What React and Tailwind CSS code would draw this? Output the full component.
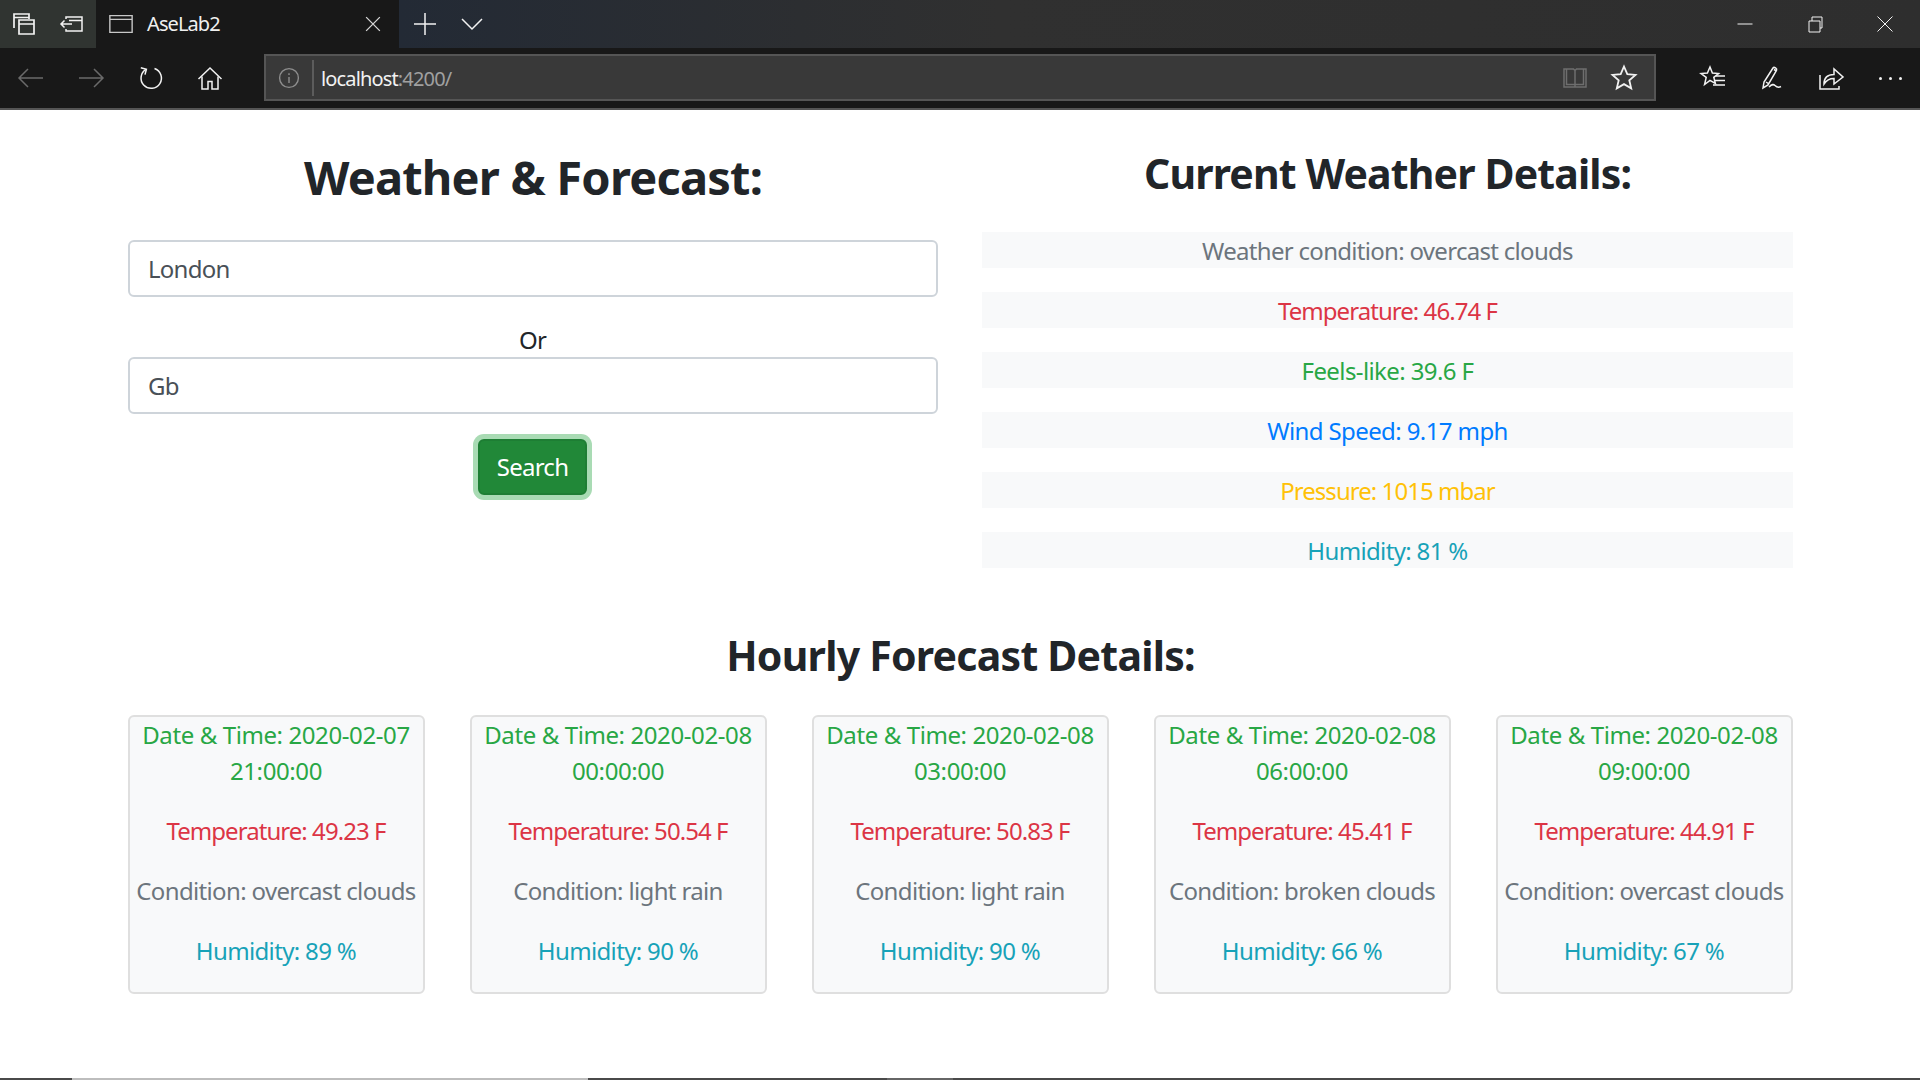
const font = "font-['Noto_Sans',sans-serif]";

const hours = [
  { date: "2020-02-07", time: "21:00:00", temp: "49.23", cond: "overcast clouds", hum: "89" },
  { date: "2020-02-08", time: "00:00:00", temp: "50.54", cond: "light rain", hum: "90" },
  { date: "2020-02-08", time: "03:00:00", temp: "50.83", cond: "light rain", hum: "90" },
  { date: "2020-02-08", time: "06:00:00", temp: "45.41", cond: "broken clouds", hum: "66" },
  { date: "2020-02-08", time: "09:00:00", temp: "44.91", cond: "overcast clouds", hum: "67" },
];

const current = [
  { text: "Weather condition: overcast clouds", color: "text-[#6c757d] tracking-[-0.7px]" },
  { text: "Temperature: 46.74 F", color: "text-[#dc3545] tracking-[-0.95px]" },
  { text: "Feels-like: 39.6 F", color: "text-[#28a745] tracking-[-0.6px]" },
  { text: "Wind Speed: 9.17 mph", color: "text-[#007bff] tracking-[-0.6px]" },
  { text: "Pressure: 1015 mbar", color: "text-[#ffc107] tracking-[-0.95px]" },
  { text: "Humidity: 81 %", color: "text-[#17a2b8] tracking-[-0.65px]" },
];

const Icon = ({ size = 28, color = "#f2f2f2", width = 1.5, children }) => (
  <svg width={size} height={size} viewBox="0 0 28 28" fill="none" stroke={color} strokeWidth={width}>
    {children}
  </svg>
);

const Slot = ({ className, children }) => (
  <div className={`flex items-center justify-center shrink-0 ${className}`}>{children}</div>
);

const TabBar = () => (
  <div className="h-12 flex bg-[linear-gradient(90deg,#303431_0,#303431_96px,#232a35_400px,#2c2e31_800px,#303030_1000px,#2e2e2e_100%)]">
    <Slot className="w-12 h-12">
      <Icon width={1.7}><path d="M4 18V4h15v5M4 7.500h15" /><path d="M9 10h15v14H9zM9 14h15" /></Icon>
    </Slot>
    <Slot className="w-12 h-12">
      <Icon><path d="M3 14h11M6.500 10.500 3 14l3.500 3.500" /><path d="M8 9V7h16v14H8v-2M11 10.500h13" /></Icon>
    </Slot>
    <div className="w-[303px] h-12 bg-[#181818] flex items-center pl-[12px] shrink-0">
      <Icon size={26} color="#c8c8c8"><path d="M2 5h24v18H2zM2 9h24" /></Icon>
      <span className={`ml-[13px] text-[20px] text-[#f0f0f0] tracking-[-0.9px] ${font}`}>AseLab2</span>
      <div className="flex-1 flex justify-end pr-[14px]">
        <Icon size={24} color="#d8d8d8"><path d="M6 6l16 16M22 6 6 22" /></Icon>
      </div>
    </div>
    <Slot className="w-[50px] h-12 ml-px">
      <Icon><path d="M14 3v22M3 14h22" /></Icon>
    </Slot>
    <Slot className="w-[44px] h-12">
      <Icon><path d="M4 9l10 10L24 9" /></Icon>
    </Slot>
    <div className="flex-1" />
    <Slot className="w-[70px] h-12">
      <Icon width={1}><path d="M6.500 14h15" /></Icon>
    </Slot>
    <Slot className="w-[70px] h-12">
      <Icon width={1}><path d="M8 11h11v11H8z" /><path d="M11 11V7h10v11h-2" /></Icon>
    </Slot>
    <Slot className="w-[70px] h-12">
      <Icon width={1}><path d="M6.500 6.500l15 15M21.500 6.500l-15 15" /></Icon>
    </Slot>
  </div>
);

const NavBar = () => (
  <div className="h-[62px] flex bg-[#181818] border-b-2 border-[#555555] pl-px">
    <Slot className="w-[60px] h-[60px]">
      <Icon color="#6a6a6a"><path d="M2 14h24M11 5l-9 9 9 9" /></Icon>
    </Slot>
    <Slot className="w-[60px] h-[60px]">
      <Icon color="#6a6a6a"><path d="M2 14h24M17 5l9 9-9 9" /></Icon>
    </Slot>
    <Slot className="w-[60px] h-[59px]">
      <Icon><path d="M9 5.400A10.200 10.200 0 1 0 17.500 4.500" /><path d="M3.800 3.800 9.400 5.200 8 10.600" /></Icon>
    </Slot>
    <Slot className="w-[60px] h-[60px] -ml-px">
      <Icon><path d="M2.500 15 14 4l11.500 11" /><path d="M6 12.500V25h6v-7.500h4V25h6V12.500" /></Icon>
    </Slot>
    <div className="flex-1 ml-[24px] mr-[26px] mt-[6px] h-[47px] bg-[#393939] border-2 border-[#555555] flex items-center min-w-0">
      <Slot className="w-[46px] h-full">
        <svg width="22" height="22" viewBox="0 0 22 22" fill="none" stroke="#8e8e8e" strokeWidth="1.4">
          <circle cx="11" cy="11" r="9.400" />
          <path d="M11 10v6M11 6.200v1.800" />
        </svg>
      </Slot>
      <div className="w-[2px] h-[36px] bg-[#5c5c5c] shrink-0" />
      <span className={`ml-[7px] pt-[2px] text-[20px] tracking-[-0.85px] text-[#f2f2f2] ${font}`}>
        localhost<span className="text-[#a0a0a0]">:4200/</span>
      </span>
      <div className="flex-1" />
      <Slot className="w-[50px] h-full -mr-px">
        <Icon color="#6e6e6e"><path d="M3 5h9.500l1.500 1.500L15.500 5H25v18H3zM14 6.500V23M5.500 5v15.500h17V5" /></Icon>
      </Slot>
      <Slot className="w-[50px] h-full mr-[5px]">
        <Icon size={28}><path d="M14 2.500l3.300 7.600 8.200.8-6.200 5.400 1.900 8-7.200-4.200-7.200 4.200 1.900-8-6.200-5.400 8.200-.8z" strokeWidth="1.800" /></Icon>
      </Slot>
    </div>
    <Slot className="w-[60px] h-[60px] pl-[1px]">
      <Icon><path d="M11 3l2.400 6 6.200.5-4.800 3.900 1.600 6.100L11 16.300l-5.400 4.200 1.600-7.200L2 9.500l6.400-.5z" /><path d="M17 12h9M16 16.500h10M14 21h12" /></Icon>
    </Slot>
    <Slot className="w-[60px] h-[60px] pl-[1px]">
      <Icon><path d="M4 24l1-6L14 4c1-1.500 4.500.5 3.500 2.500L9 21zM7 18l3 2M15 5.500l2.500 1.500" /><path d="M10 23c3-3 4.500-3 6-1.500s3 2.500 6 1" /></Icon>
    </Slot>
    <Slot className="w-[58px] h-[60px]">
      <Icon><path d="M3 11v14h19v-3" /><path d="M7 20c0-6 3-9.500 10-9.500V5l9 8-9 7v-5.500c-4.500 0-7.500 1.500-10 5.500z" /></Icon>
    </Slot>
    <Slot className="w-[60px] h-[60px]">
      <div className="flex gap-[7px]">
        <div className="w-[3px] h-[3px] rounded-full bg-[#f2f2f2]" />
        <div className="w-[3px] h-[3px] rounded-full bg-[#f2f2f2]" />
        <div className="w-[3px] h-[3px] rounded-full bg-[#f2f2f2]" />
      </div>
    </Slot>
  </div>
);

const SearchPanel = () => (
  <div className="flex flex-col items-center pt-[38px]">
    <h2 className="text-[47px] leading-[58px] font-bold mb-[34px] tracking-[-0.8px]">Weather &amp; Forecast:</h2>
    <input
      readOnly
      value="London"
      className="w-full h-[57px] border-2 border-[#ced4da] rounded-[6px] pl-[18px] text-[#495057] bg-white outline-none"
    />
    <div className="mt-[25px] h-[35px] leading-[36px] pr-px">Or</div>
    <input
      readOnly
      value="Gb"
      className="w-full h-[57px] border-2 border-[#ced4da] rounded-[6px] pl-[18px] text-[#495057] bg-white outline-none"
    />
    <button className="mt-[25px] mr-px w-[109px] h-[56px] bg-[#218838] border-2 border-[#1e7e34] rounded-[6px] text-white shadow-[0_0_0_5px_#a9dbb4]">
      Search
    </button>
  </div>
);

const CurrentPanel = () => (
  <div className="pt-[38px]">
    <h3 className="text-[41px] leading-[50px] font-bold text-center mb-[34px] tracking-[-0.85px]">Current Weather Details:</h3>
    <div className="flex flex-col gap-6">
      {current.map((row) => (
        <div key={row.text} className={`h-9 leading-[38px] bg-[#f8f9fa] text-center ${row.color}`}>
          {row.text}
        </div>
      ))}
    </div>
  </div>
);

const HourCard = ({ item }) => (
  <div className="h-[279px] bg-[#f8f9fa] border-2 border-[#dfdfdf] rounded-[6px] text-center flex flex-col gap-6 pr-px">
    <p className="text-[#28a745] leading-9 tracking-[-0.4px]">
      Date &amp; Time: {item.date}
      <br />
      {item.time}
    </p>
    <p className="text-[#dc3545] leading-9 tracking-[-0.95px]">Temperature: {item.temp} F</p>
    <p className="text-[#6c757d] leading-9 tracking-[-0.65px]">Condition: {item.cond}</p>
    <p className="text-[#17a2b8] leading-9 tracking-[-0.65px]">Humidity: {item.hum} %</p>
  </div>
);

export default function App() {
  return (
    <div className={`h-screen overflow-hidden flex flex-col bg-white text-[#212529] text-[24px] tracking-[-0.75px] ${font}`}>
      <TabBar />
      <NavBar />
      <div className="flex-1 pl-[128px] pr-[127px] min-h-0">
        <div className="grid grid-cols-[810px_811px] gap-x-[44px]">
          <SearchPanel />
          <CurrentPanel />
        </div>
        <h3 className="mt-[62px] text-[41px] leading-[50px] font-bold text-center mb-[35px] tracking-[-0.75px]">Hourly Forecast Details:</h3>
        <div className="grid grid-cols-5 gap-x-[45px]">
          {hours.map((item) => (
            <HourCard key={item.time} item={item} />
          ))}
        </div>
      </div>
      <div className="h-[2px] flex shrink-0">
        <div className="w-[72px] bg-[#4a4a4a]" />
        <div className="w-[516px] bg-[#bdbdbd]" />
        <div className="w-[299px] bg-[#4a4a4a]" />
        <div className="w-[66px] bg-[#666666]" />
        <div className="flex-1 bg-[#4a4a4a]" />
      </div>
    </div>
  );
}
